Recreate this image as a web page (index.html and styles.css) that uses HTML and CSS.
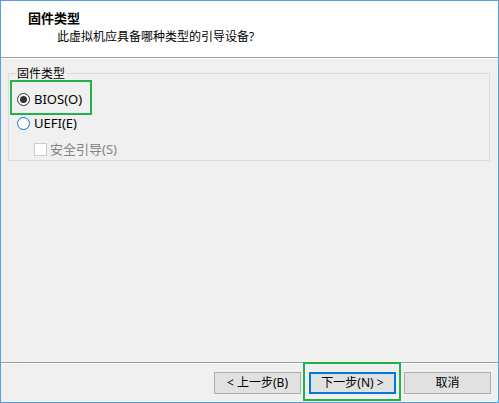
FILE: index.html
```html
<!DOCTYPE html>
<html lang="zh-CN">
<head>
<meta charset="utf-8">
<title>固件类型</title>
<link rel="stylesheet" href="styles.css">
</head>
<body>
<div class="window">
  <div class="header">
    <div class="title">固件类型</div>
    <div class="subtitle">此虚拟机应具备哪种类型的引导设备?</div>
  </div>
  <div class="sep"></div>
  <div class="content">
    <div class="group">
      <span class="legend">固件类型</span>
      <div class="highlight hl-bios"></div>
      <div class="row">
        <span class="radio checked"></span>
        <span class="label">BIOS(O)</span>
      </div>
      <div class="row">
        <span class="radio focus"></span>
        <span class="label">UEFI(E)</span>
      </div>
      <div class="row row-check">
        <span class="check"></span>
        <span class="label disabled">安全引导(S)</span>
      </div>
    </div>
  </div>
  <div class="sep"></div>
  <div class="footer">
    <button class="btn">&lt; 上一步(B)</button>
    <button class="btn default">下一步(N) &gt;<span class="highlight hl-next"></span></button>
    <button class="btn">取消</button>
  </div>
</div>
</body>
</html>
```
FILE: styles.css
```css
* { box-sizing: border-box; }
html, body { margin: 0; padding: 0; }
body {
  font-family: "Noto Sans", "Noto Sans CJK SC", sans-serif;
  font-size: 12px;
  color: #000;
  background: #f0f0f0;
}
.window {
  width: 499px;
  height: 403px;
  border: 1px solid #5a9de0;
  display: flex;
  flex-direction: column;
  background: #f0f0f0;
}
.header {
  height: 56px;
  background: #fff;
  padding: 9px 0 0 27px;
}
.title {
  font-weight: bold;
  font-size: 13px;
  line-height: 16px;
}
.subtitle {
  margin-top: 3px;
  margin-left: 29px;
  line-height: 16px;
}
.sep {
  height: 2px;
  border-top: 1px solid #a0a0a0;
  border-bottom: 1px solid #fff;
}
.content {
  flex: 1;
  padding: 14px 8px 0 7px;
}
.group {
  position: relative;
  height: 88px;
  border: 1px solid #dcdcdc;
  padding: 13px 0 0 8px;
}
.legend {
  position: absolute;
  top: -8px;
  left: 7px;
  padding: 0 1px;
  background: #f0f0f0;
  line-height: 16px;
}
.row {
  display: flex;
  align-items: center;
  height: 24px;
  gap: 4px;
}
.row-check {
  margin-top: 2px;
  padding-left: 17px;
  gap: 3px;
}
.radio {
  width: 13px;
  height: 13px;
  border-radius: 50%;
  border: 1px solid #333;
  background: #fff;
  display: flex;
  align-items: center;
  justify-content: center;
}
.radio.checked::after {
  content: "";
  width: 7px;
  height: 7px;
  border-radius: 50%;
  background: #333;
}
.radio.focus { border-color: #0078d7; }
.check {
  width: 13px;
  height: 13px;
  border: 1px solid #cccccc;
  background: #fff;
}
.label { line-height: 16px; font-size: 13px; }
.label.disabled { color: #838383; }
.highlight {
  position: absolute;
  border: 2px solid #22b14c;
  pointer-events: none;
}
.hl-bios {
  left: 1px;
  top: 6px;
  width: 82px;
  height: 35px;
}
.footer {
  height: 38px;
  display: flex;
  justify-content: flex-end;
  align-items: flex-start;
  gap: 8px;
  padding: 8px 7px 0 0;
}
.btn {
  position: relative;
  width: 87px;
  height: 22px;
  background: #e1e1e1;
  border: 1px solid #adadad;
  font-family: inherit;
  font-size: 12px;
  color: #000;
  padding: 0;
  line-height: 18px;
}
.btn.default { border: 2px solid #0078d7; }
.hl-next {
  left: -8px;
  right: -7px;
  top: -12px;
  bottom: -9px;
}
```
